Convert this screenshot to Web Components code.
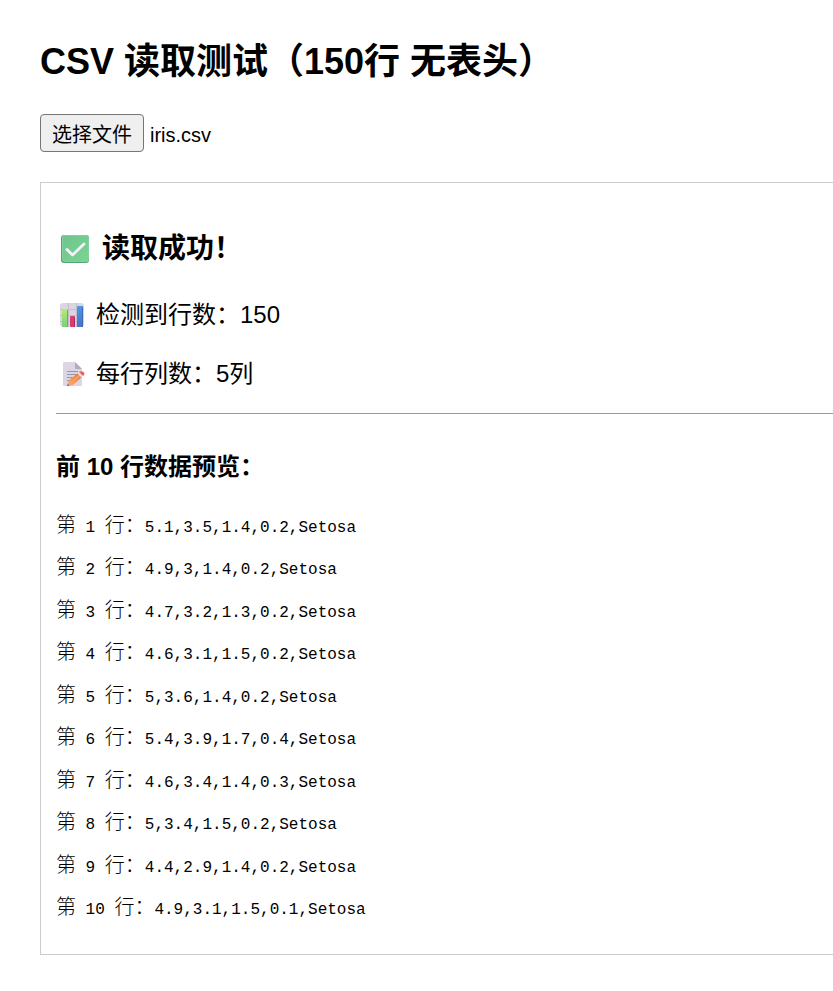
<!DOCTYPE html>
<html lang="zh-CN">
  <head>
    <meta charset="UTF-8" />
    <meta name="viewport" content="width=device-width, initial-scale=1.0" />
    <title>CSV 读取测试</title>
    <style>
      body {
        margin: 0;
        background: #fff;
        color: #000;
        font-family: "Liberation Sans", "Noto Sans CJK SC", sans-serif;
      }
    </style>
  </head>
  <body>
    <csv-page>
      <span slot="title">CSV 读取测试（150行 无表头）</span>
      <file-picker filename="iris.csv">选择文件</file-picker>
      <result-panel>
        <status-line level="title"><line-icon slot="icon" name="check"></line-icon>读取成功！</status-line>
        <status-line><line-icon slot="icon" name="chart"></line-icon>检测到行数：150</status-line>
        <status-line><line-icon slot="icon" name="memo"></line-icon>每行列数：5列</status-line>
        <data-preview slot="preview">前 10 行数据预览：</data-preview>
      </result-panel>
    </csv-page>

    <template id="page-template">
      <style>
        :host {
          display: block;
          padding: 32px 0 36px 40px;
        }
        h2 {
          margin: 0 0 22px;
          font-size: 36px;
          line-height: 60px;
        }
      </style>
      <h2><slot name="title"></slot></h2>
      <slot></slot>
    </template>

    <template id="picker-template">
      <style>
        :host {
          display: flex;
          align-items: baseline;
          gap: 6px;
          margin-bottom: 30px;
          font-size: 20px;
        }
        button {
          height: 38px;
          padding: 0 11px;
          border: 1px solid #767676;
          border-radius: 4px;
          background: #efefef;
          color: #000;
          font: inherit;
        }
        label {
          line-height: 24px;
        }
      </style>
      <button type="button"><slot></slot></button>
      <label for="file"></label>
      <input id="file" type="file" accept=".csv" hidden />
    </template>

    <template id="panel-template">
      <style>
        :host {
          display: block;
          padding: 15px 15px 27px;
          border: 1px solid #ccc;
          border-right: 0;
        }
        .summary {
          display: flex;
          flex-direction: column;
          gap: 23px;
          padding-top: 30px;
        }
        hr {
          margin: 21px -15px 35px 0;
          border: 0;
          border-top: 1px solid #999;
        }
      </style>
      <div class="summary"><slot></slot></div>
      <hr />
      <slot name="preview"></slot>
    </template>

    <template id="status-template">
      <style>
        :host {
          display: block;
        }
        h3,
        p {
          display: flex;
          align-items: center;
          gap: 7px;
          margin: 0;
          font-size: 24px;
          line-height: 36px;
        }
        h3 {
          gap: 8px;
          margin-bottom: 4px;
          font-size: 28px;
          line-height: 42px;
        }
      </style>
    </template>

    <template id="preview-template">
      <style>
        :host {
          display: block;
        }
        h4 {
          margin: 0 0 17px;
          font-size: 24px;
          line-height: 36px;
        }
        .rows {
          display: grid;
          grid-auto-rows: 1fr;
          align-items: center;
          min-height: 425px;
          font-family: "Liberation Mono", "Noto Sans CJK SC", monospace;
          font-size: 16px;
          white-space: pre;
        }
        .han {
          font-size: 20px;
          font-weight: 300;
        }
      </style>
      <h4><slot></slot></h4>
      <div class="rows"></div>
    </template>

    <template id="icon-check">
      <svg viewBox="0 0 38 28" width="38" height="28">
        <defs>
          <linearGradient id="g" x1="0" y1="0" x2="1" y2="1">
            <stop offset="0" stop-color="#71c48f" />
            <stop offset="1" stop-color="#79d491" />
          </linearGradient>
        </defs>
        <rect x="5" y="0" width="28" height="28" rx="3" fill="#55a477" />
        <rect x="6" y="0" width="27" height="27" rx="3" fill="#84cf9e" />
        <rect x="7" y="1" width="25" height="25" rx="2" fill="url(#g)" />
        <path d="M11 14.500 L16.500 20 L28 9" fill="none" stroke="#f5f1fa" stroke-width="2.800" stroke-linecap="round" stroke-linejoin="round" />
      </svg>
    </template>

    <template id="icon-chart">
      <svg viewBox="0 0 33 24" width="33" height="24">
        <defs>
          <linearGradient id="green" x1="0" y1="0" x2="0" y2="1">
            <stop offset="0" stop-color="#b6ed68" />
            <stop offset="1" stop-color="#78cf80" />
          </linearGradient>
          <linearGradient id="blue" x1="0" y1="0" x2="0" y2="1">
            <stop offset="0" stop-color="#4b99e6" />
            <stop offset="1" stop-color="#4673c3" />
          </linearGradient>
        </defs>
        <rect x="4" y="0" width="24" height="24" rx="3" fill="#dcd6e2" />
        <path d="M12.500 0V24M20.500 0V24M4 6.500H28M4 12.500H28M4 18.500H28" stroke="#c3bccb" fill="none" />
        <rect x="6" y="6" width="6" height="18" rx="1" fill="url(#green)" />
        <path d="M11.500 7V24" stroke="#7ba965" />
        <rect x="14" y="13" width="5" height="11" rx="1" fill="#d83d71" />
        <path d="M18.500 14V24" stroke="#a72a65" />
        <rect x="21" y="3" width="6" height="21" rx="1" fill="url(#blue)" />
        <path d="M26.500 4V24" stroke="#3d68b4" />
      </svg>
    </template>

    <template id="icon-memo">
      <svg viewBox="0 0 33 24" width="33" height="24">
        <defs>
          <linearGradient id="pen" x1="0" y1="1" x2="1" y2="0">
            <stop offset="0" stop-color="#ffb35b" />
            <stop offset="1" stop-color="#e57443" />
          </linearGradient>
        </defs>
        <path d="M8 0H19L26 7V23Q26 24 25 24H8Q7 24 7 23V1Q7 0 8 0Z" fill="#dcd5e3" />
        <path d="M19 0L26 7H20Q19 7 19 6Z" fill="#b4aac0" />
        <path d="M11 9.500H22M11 12.500H22M11 15.500H19M11 18.500H16" stroke="#9d96aa" fill="none" />
        <path d="M11 24L13 18L22 11L26 15L17 23Z" fill="url(#pen)" />
        <path d="M11 24L13 18L17 23Z" fill="#f4a27a" />
        <path d="M11 24L12 22L13 23.500Z" fill="#5d4660" />
        <path d="M15 21L24 13" stroke="#ffa35a" stroke-width="1.500" />
        <path d="M21.500 11.500L23 10L27 14L25.500 15.500Z" fill="#e9e2ef" />
        <path d="M23 10L24 9.500Q26 8.500 28 10.500Q29 12 28 13L27 14Z" fill="#ed6258" />
      </svg>
    </template>

    <script>
      // attach an open shadow root filled from a template
      function attach(el, id) {
        el.attachShadow({ mode: "open" });
        el.shadowRoot.appendChild(document.getElementById(id).content.cloneNode(true));
      }

      class CsvPage extends HTMLElement {
        constructor() {
          super();
          attach(this, "page-template");
        }
      }

      class FilePicker extends HTMLElement {
        constructor() {
          super();
          attach(this, "picker-template");
          this.button = this.shadowRoot.querySelector("button");
          this.input = this.shadowRoot.querySelector("input");
          this.label = this.shadowRoot.querySelector("label");
        }

        connectedCallback() {
          this.label.textContent = this.getAttribute("filename");
          this.button.addEventListener("click", () => this.input.click());
          this.input.addEventListener("change", () => {
            if (this.input.files.length) {
              this.label.textContent = this.input.files[0].name;
            }
          });
        }
      }

      class ResultPanel extends HTMLElement {
        constructor() {
          super();
          attach(this, "panel-template");
        }
      }

      class LineIcon extends HTMLElement {
        constructor() {
          super();
          attach(this, "icon-" + this.getAttribute("name"));
          const style = document.createElement("style");
          style.textContent = ":host { display: flex; } svg { display: block; }";
          this.shadowRoot.appendChild(style);
        }
      }

      class StatusLine extends HTMLElement {
        constructor() {
          super();
          attach(this, "status-template");
          const tag = this.getAttribute("level") === "title" ? "h3" : "p";
          const line = document.createElement(tag);
          line.innerHTML = `<slot name="icon"></slot><span><slot></slot></span>`;
          this.shadowRoot.appendChild(line);
        }
      }

      const rows = [
        "5.1,3.5,1.4,0.2,Setosa",
        "4.9,3,1.4,0.2,Setosa",
        "4.7,3.2,1.3,0.2,Setosa",
        "4.6,3.1,1.5,0.2,Setosa",
        "5,3.6,1.4,0.2,Setosa",
        "5.4,3.9,1.7,0.4,Setosa",
        "4.6,3.4,1.4,0.3,Setosa",
        "5,3.4,1.5,0.2,Setosa",
        "4.4,2.9,1.4,0.2,Setosa",
        "4.9,3.1,1.5,0.1,Setosa",
      ];

      class DataPreview extends HTMLElement {
        constructor() {
          super();
          attach(this, "preview-template");
        }

        connectedCallback() {
          this.shadowRoot.querySelector(".rows").innerHTML = rows
            .map((row, i) => `<div><span class="han">第</span> ${i + 1} <span class="han">行：</span>${row}</div>`)
            .join("");
        }
      }

      customElements.define("csv-page", CsvPage);
      customElements.define("file-picker", FilePicker);
      customElements.define("result-panel", ResultPanel);
      customElements.define("line-icon", LineIcon);
      customElements.define("status-line", StatusLine);
      customElements.define("data-preview", DataPreview);
    </script>
  </body>
</html>
